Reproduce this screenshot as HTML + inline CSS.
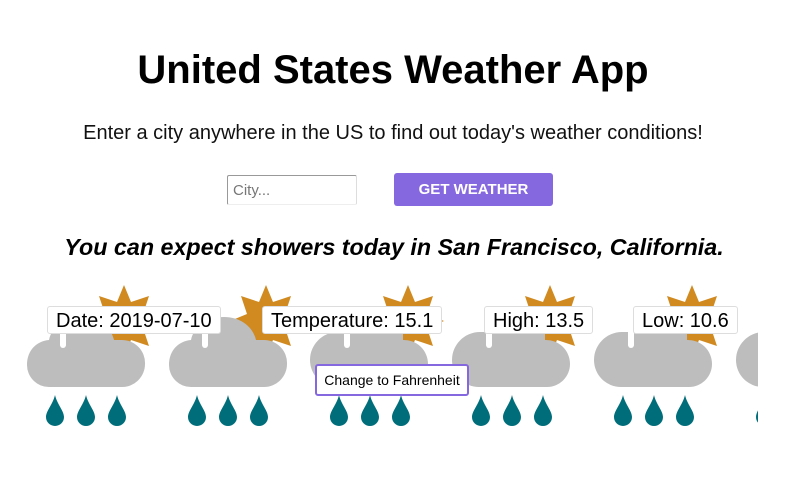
<!DOCTYPE html>
<html><head><meta charset="utf-8"><style>
body{margin:0;width:798px;height:484px;background:#fff;font-family:"Liberation Sans",sans-serif;position:relative;overflow:hidden}
.a{position:absolute}
h1{position:absolute;left:0;width:786px;top:48px;margin:0;text-align:center;font-size:40px;font-weight:bold;color:#000}
.sub{left:0;width:786px;top:122px;text-align:center;font-size:20px;color:#111}
.inp{left:227px;top:175px;width:130px;height:30px;border:1px solid #999;border-right-color:#ddd;border-bottom-color:#eee;border-radius:2px;box-sizing:border-box;font-size:15px;color:#777;padding:6px 5px}
.btn{left:394px;top:173px;width:159px;height:33px;background:#8568e0;border-radius:3px;color:#fff;font-weight:bold;font-size:15px;text-align:center;line-height:34px}
.exp{left:0;width:788px;top:234px;text-align:center;font-size:23.3px;font-weight:bold;font-style:italic}
.wrap{left:22px;top:280px;width:736px;height:160px;overflow:hidden}
.lab{background:#fff;border:1px solid #ddd;border-radius:3px;font-size:20px;height:28px;line-height:28px;box-sizing:border-box;padding:0 8px;top:306px;color:#000;white-space:nowrap}
.cf{left:315px;top:364px;width:154px;height:32px;border:2px solid #8568e0;border-radius:3px;background:#fff;box-sizing:border-box;font-size:14px;text-align:center;line-height:28px}
</style></head><body>
<h1>United States Weather App</h1>
<div class="a sub">Enter a city anywhere in the US to find out today's weather conditions!</div>
<div class="a inp">City...</div>
<div class="a btn">GET WEATHER</div>
<div class="a exp">You can expect showers today in San Francisco, California.</div>
<div class="a wrap">
<svg width="736" height="160" viewBox="0 0 736 160">
<defs>
<g id="sun"><polygon fill="#d08a20" points="102,5 109,22 127,16 121,34 138,41 121,48 127,66 109,60 102,77 95,60 77,66 83,48 66,41 83,34 77,16 95,22"/></g>
<g id="drops" fill="#006d7a">
<path d="M33,115 C31,124 24,131 24,137 a9,9 0 0 0 18,0 C42,131 35,124 33,115z"/>
<path d="M64,115 C62,124 55,131 55,137 a9,9 0 0 0 18,0 C73,131 66,124 64,115z"/>
<path d="M95,115 C93,124 86,131 86,137 a9,9 0 0 0 18,0 C104,131 97,124 95,115z"/>
</g>
<g id="A"><use href="#sun"/>
<path fill="#bdbdbd" d="M27,107 A22,22 0 0 1 5,85 C5,70 15,61 27,60 C30,46 43,37 60,37 C77,37 89,47 92,60 L100,60 A23,23 0 0 1 123,84 A23,23 0 0 1 100,107 Z"/>
<rect x="38" y="50" width="6" height="18" rx="3" fill="#fff"/><use href="#drops"/></g>
<g id="B"><use href="#sun"/>
<path fill="#bdbdbd" d="M4,80 A28,28 0 0 1 32,52 H97 V60 A24,24 0 0 1 122,84 A23,23 0 0 1 99,107 H31 A27,27 0 0 1 4,80 Z"/>
<rect x="38" y="48" width="6" height="20" rx="3" fill="#fff"/><use href="#drops"/></g>
</defs>
<use href="#A" x="0"/><use href="#A" x="142"/><use href="#B" x="284"/><use href="#B" x="426"/><use href="#B" x="568"/><use href="#B" x="710"/>
</svg>
</div>
<div class="a lab" style="left:47px;width:174px">Date: 2019-07-10</div>
<div class="a lab" style="left:262px;width:180px">Temperature: 15.1</div>
<div class="a lab" style="left:484px;width:109px">High: 13.5</div>
<div class="a lab" style="left:633px;width:105px">Low: 10.6</div>
<div class="a cf">Change to Fahrenheit</div>
</body></html>
